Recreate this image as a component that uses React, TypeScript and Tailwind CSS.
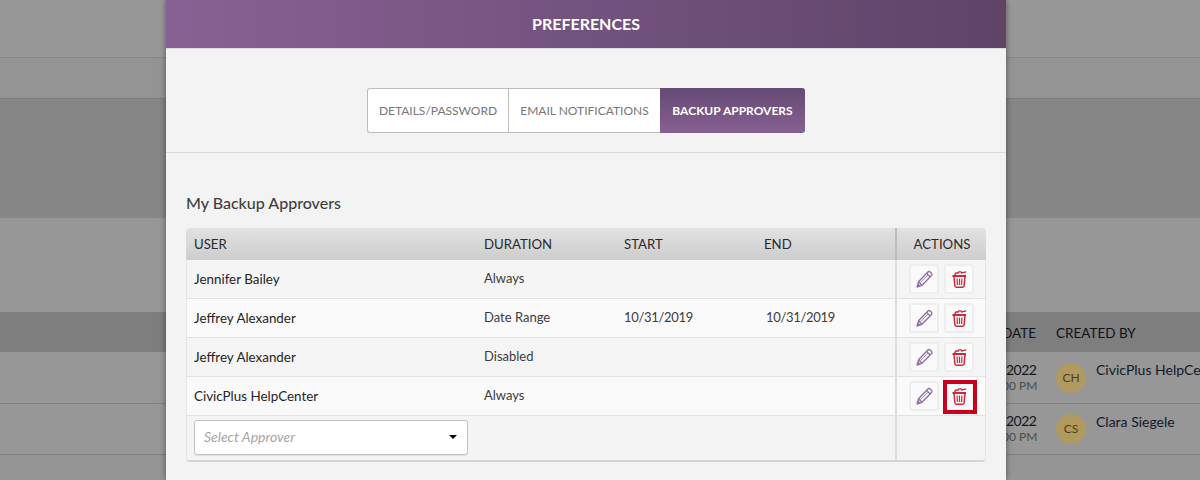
import React from "react";

const font = { fontFamily: '"Lato", "Noto Sans", sans-serif' };

function PencilIcon() {
  return (
    <svg width="17" height="18" viewBox="0 0 17 18" fill="none" stroke="#8f6fa3" strokeWidth="1.3" strokeLinejoin="round">
      <path d="M1.2 16.8 L2.5 11.8 L11.9 2 Q13 1 14.1 1.9 L15.5 3.3 Q16.4 4.4 15.5 5.5 L6 15.3 Z" />
      <path d="M10.6 3.4 L14.2 7" />
      <path d="M2.5 11.8 L6 15.3" />
      <path d="M4.2 12.9 L12.2 4.9" strokeWidth="0.8" />
      <path d="M1.2 16.8 L2 14.3 L3.6 15.9 Z" fill="#8f6fa3" />
    </svg>
  );
}

function TrashIcon() {
  return (
    <svg width="15" height="17" viewBox="0 0 15 17" fill="none" stroke="#c9283d">
      <path d="M0.5 5 H14" strokeWidth="1.8" />
      <path d="M2.5 4 L4 2 H6.2 L6.8 0.8 H9 L9.6 2 L14.2 0.8" strokeWidth="1.3" />
      <path d="M2 5.5 L2.9 15 Q3.1 16.2 4.4 16.2 H10.6 Q11.9 16.2 12.1 15 L13 5.5" strokeWidth="1.5" />
      <path d="M5.1 7.5 L5.4 14 M7.5 7.5 V14 M9.9 7.5 L9.6 14" strokeWidth="1.2" />
    </svg>
  );
}

function ActionButton({ children }: { children: React.ReactNode }) {
  return (
    <div className="flex h-[30px] w-[30px] items-center justify-center rounded-[3px] border-2 border-[#eeeeee] bg-[#fafafa]">
      {children}
    </div>
  );
}

const edge = "shadow-[inset_1px_0_0_#e6e6e6,inset_-1px_0_0_#e6e6e6]";

const rows = [
  { user: "Jennifer Bailey", duration: "Always", start: "", end: "", bg: "bg-[#f5f5f5]" },
  { user: "Jeffrey Alexander", duration: "Date Range", start: "10/31/2019", end: "10/31/2019", bg: "bg-[#fafafa]" },
  { user: "Jeffrey Alexander", duration: "Disabled", start: "", end: "", bg: "bg-[#f5f5f5]" },
  { user: "CivicPlus HelpCenter", duration: "Always", start: "", end: "", bg: "bg-[#fafafa]", highlight: true },
];

function BackgroundRow({
  initials,
  name,
  heightClass,
  avatarClass,
  dateClass,
}: {
  initials: string;
  name: string;
  heightClass: string;
  avatarClass: string;
  dateClass: string;
}) {
  return (
    <div className={`flex items-start border-b border-[#7f7f7f] bg-[#979797] ${heightClass}`}>
      <div className="ml-[1006px] flex">
        <div className={`w-[50px] ${dateClass}`}>
          <div className="text-[14px] leading-[20px] tracking-[-0.5px] text-[#14141c]">2022</div>
          <div className="-ml-[4px] text-[12px] leading-[12px] text-[#4c4c4c]">00 PM</div>
        </div>
        <div className={`flex h-[30px] w-[30px] items-center justify-center rounded-full bg-[#b09a5f] text-[12px] text-[#4f3f14] ${avatarClass}`}>
          {initials}
        </div>
        <div className="whitespace-nowrap pl-[10px] pt-[8px] text-[14px] leading-[20px] text-[#10182a]">{name}</div>
      </div>
    </div>
  );
}

export default function App() {
  return (
    <div className="relative h-[480px] w-[1200px] overflow-hidden bg-[#959595]" style={font}>
      <div className="flex h-[480px] flex-col">
        <div className="h-[58px] border-b border-[#868686] bg-[#989898]" />
        <div className="h-[41px] border-b border-[#7d7d7d] bg-[#949494]" />
        <div className="h-[119px] bg-[#868686]" />
        <div className="h-[94px] bg-[#979797]" />
        <div className="flex h-[40px] items-center bg-[#7e7e7e] pl-[1002px] pt-[2px] text-[13.5px] text-[#10101a]">
          <span className="w-[54px]">DATE</span>
          <span className="whitespace-nowrap">CREATED BY</span>
        </div>
        <BackgroundRow initials="CH" name="CivicPlus HelpCenter" heightClass="h-[52px]" avatarClass="mt-[11px]" dateClass="pt-[8px]" />
        <BackgroundRow initials="CS" name="Clara Siegele" heightClass="h-[51px]" avatarClass="mt-[10px]" dateClass="pt-[7px]" />
        <div className="flex-1 bg-[#959595]" />
      </div>

      <div className="absolute left-[166px] top-0 h-[480px] w-[840px] bg-[#f3f3f3] shadow-[0_0_6px_rgba(0,0,0,0.45)]">
        <div className="flex h-[49px] items-center justify-center border-b border-[#dcdcdc] bg-gradient-to-r from-[#896194] to-[#5f4468] text-[16px] font-bold text-white">
          PREFERENCES
        </div>

        <div className="flex h-[104px] justify-center border-b border-[#dadada] pt-[39px]">
          <div className="flex h-[45px] text-[12px] text-[#777777]">
            <div className="flex w-[141px] items-center justify-center rounded-l-[3px] border border-r-0 border-[#bdbdbd] bg-white">
              DETAILS/PASSWORD
            </div>
            <div className="flex w-[152px] items-center justify-center border border-r-0 border-[#bdbdbd] bg-white">
              EMAIL NOTIFICATIONS
            </div>
            <div className="flex w-[145px] items-center justify-center rounded-r-[3px] bg-gradient-to-b from-[#664a74] to-[#866092] font-bold text-white">
              BACKUP APPROVERS
            </div>
          </div>
        </div>

        <div className="px-5">
          <h2 className="mt-[39px] text-[16px] font-medium leading-[22px] text-[#3f3f3f]">My Backup Approvers</h2>

          <div className="mt-[14px] w-[800px] overflow-hidden rounded-[4px] border-b-2 border-b-[#d4d4d4] bg-[#f7f7f7] text-[13px] text-[#1f1f1f]">
            <div className="flex h-[32px] items-center bg-gradient-to-b from-[#e2e2e2] to-[#cdcdcd] pt-[1px] text-[13.2px] text-[#2a2a2a]">
              <div className="w-[298px] pl-2">USER</div>
              <div className="w-[140px]">DURATION</div>
              <div className="w-[140px]">START</div>
              <div className="w-[131px]">END</div>
              <div className="-mt-[1px] flex h-[32px] flex-1 items-center justify-center border-l-2 border-[#bcbcbc] pl-[1px] pt-[1px]">ACTIONS</div>
            </div>

            {rows.map((r, i) => (
              <div key={i} className={`flex h-[39px] items-center border-b border-[#e2e2e2] ${edge} ${r.bg}`}>
                <div className="w-[298px] pb-[1px] pl-2 text-[13.4px] leading-[18px] text-[#242424]">{r.user}</div>
                <div className="w-[140px] text-[#3c3c3c]">{r.duration}</div>
                <div className="w-[142px] tracking-[-0.3px] text-[#3c3c3c]">{r.start}</div>
                <div className="w-[129px] tracking-[-0.3px] text-[#3c3c3c]">{r.end}</div>
                <div className="flex h-full flex-1 items-center gap-[5px] border-l-2 border-[#dddddd] pl-[12px]">
                  <ActionButton>
                    <PencilIcon />
                  </ActionButton>
                  {r.highlight ? (
                    <div className="relative">
                      <ActionButton>
                        <TrashIcon />
                      </ActionButton>
                      <div className="absolute -left-px -top-px h-[34px] w-[34px] border-[4px] border-[#c8001e]" />
                    </div>
                  ) : (
                    <ActionButton>
                      <TrashIcon />
                    </ActionButton>
                  )}
                </div>
              </div>
            ))}

            <div className={`flex h-[44px] bg-[#f4f4f4] ${edge}`}>
              <div className="w-[709px] pl-2 pt-[4px]">
                <div className="flex h-[35px] w-[274px] items-center justify-between rounded-[3px] border border-[#c4c4c4] bg-white pb-[1px] pl-[9px] pr-[10px] text-[14px] italic leading-[20px] text-[#a6a6a6] shadow-[0_1px_1px_rgba(0,0,0,0.08)]">
                  <span>Select Approver</span>
                  <span className="h-0 w-0 border-x-[4px] border-t-[4px] border-x-transparent border-t-black" />
                </div>
              </div>
              <div className="flex-1 border-l-2 border-[#dddddd]" />
            </div>
          </div>
        </div>
      </div>
    </div>
  );
}
